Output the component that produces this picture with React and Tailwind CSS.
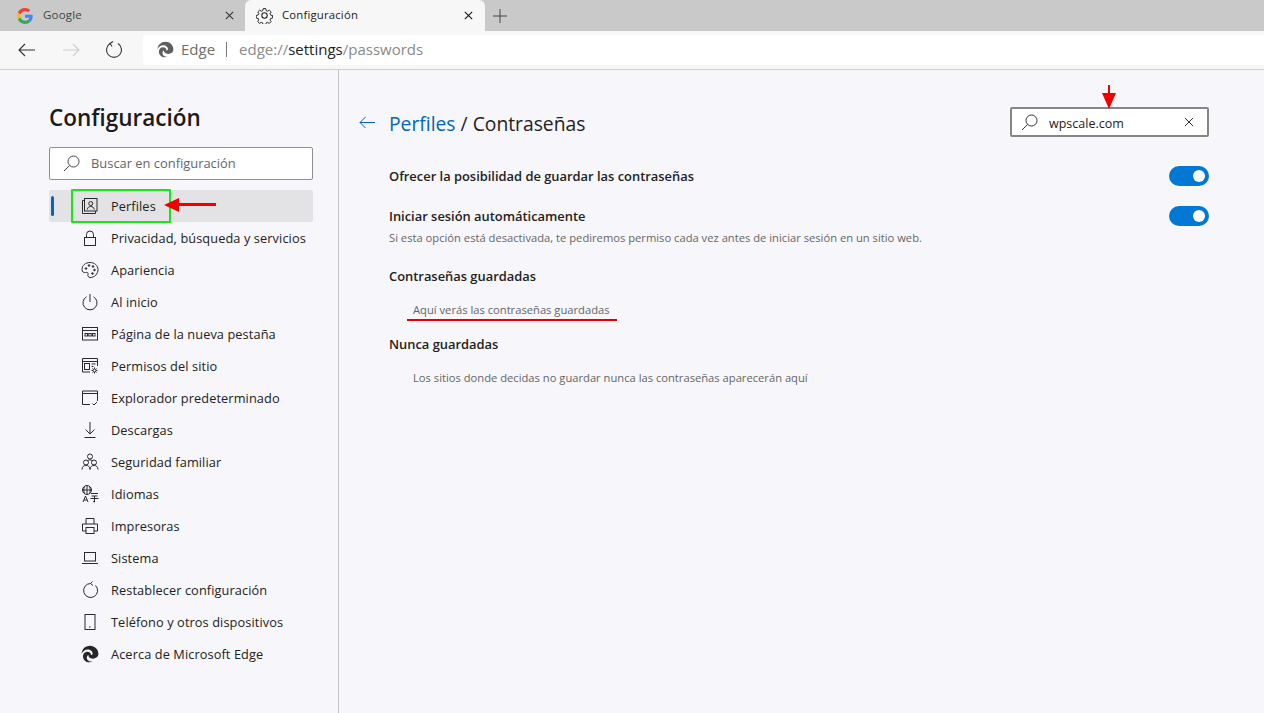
import React from "react";

const S = { fill: "none", stroke: "currentColor", strokeWidth: 1 };
const Ic = ({ children, size = 18, vb = 18, cls = "" }) => (
  <svg width={size} height={size} viewBox={`0 0 ${vb} ${vb}`} {...S} className={cls}>{children}</svg>
);

const EdgeLogo = ({ size = 18, color = "#2b2b2b" }) => (
  <svg width={size} height={size} viewBox="0 0 18 18">
    <path fill={color} d="M9 .8C4.3.8.7 4.4.6 8.8c1.2-2.6 3.6-4.2 6-4.2 2.9 0 5 2 5 3.9 0 .9-.5 1.5-1.2 1.5-.3 0-.4-.1-.4-.3 0-1.6-1.5-3-3.6-3-2.6 0-4.4 2.2-4.4 4.7 0 3.400 3 5.900 6.400 5.900 1.200 0 2.300-.3 3.200-.8-1.100.2-4.600.1-5.600-2.600-.6-1.600.2-3.200 1.400-3.800-.2 1.700 1.300 3.600 4.400 3.600 3 0 5.600-1.900 5.600-4.600C17.400 4.400 13.700.8 9 .8z" />
  </svg>
);

const icons = {
  perfiles: (
    <Ic>
      <rect x="3.500" y="1.500" width="12.500" height="12.500" />
      <path d="M3.500 3.500h-2v13h13v-2.500" />
      <circle cx="9.750" cy="6.500" r="2" />
      <path d="M6.300 12.500c0-4 6.900-4 6.900 0" />
    </Ic>
  ),
  lock: (
    <Ic>
      <rect x="3.500" y="8.500" width="11" height="8" />
      <path d="M5.500 8.500V5.500a3.500 3.500 0 0 1 7 0v3" />
    </Ic>
  ),
  palette: (
    <Ic>
      <path d="M9 1.500c-4.500 0-8 3-8 7 0 2.500 2 3.500 3.500 3 2-.6 3 .6 2.500 2-.5 1.500.5 3 2 3 4.500 0 8-3.500 8-8 0-4-3.500-7-8-7z" />
      <circle cx="5" cy="7.500" r=".8" fill="currentColor" />
      <circle cx="8" cy="4.500" r=".8" fill="currentColor" />
      <circle cx="12" cy="5.500" r=".8" fill="currentColor" />
      <circle cx="13.500" cy="9" r=".8" fill="currentColor" />
      <circle cx="11.500" cy="12.500" r=".8" fill="currentColor" />
    </Ic>
  ),
  power: (
    <Ic>
      <path d="M5.500 3.800a7 7 0 1 0 7 0" />
      <path d="M9 1v8" />
    </Ic>
  ),
  newtab: (
    <Ic>
      <rect x="1.500" y="2.500" width="15" height="12.500" />
      <path d="M1.500 5.500h15" />
      <rect x="4" y="8.500" width="2.500" height="2.500" />
      <rect x="7.750" y="8.500" width="2.500" height="2.500" />
      <rect x="11.500" y="8.500" width="2.500" height="2.500" />
    </Ic>
  ),
  perms: (
    <Ic>
      <path d="M9 15H1.500V1.500h15V9" />
      <path d="M1.500 4.500h15" />
      <rect x="3.500" y="6.500" width="5" height="6" />
      <path d="M10.500 7h4M10.500 9.500h2" />
      <circle cx="13.500" cy="13.500" r="1.500" />
      <path d="M13.500 10.500v1.500M13.500 15v1.500M10.500 13.500h1.500M15 13.500h1.500M11.500 11.500l1 1M14.500 14.500l1 1M15.500 11.500l-1 1M12.500 14.500l-1 1" />
    </Ic>
  ),
  browser: (
    <Ic>
      <path d="M9 15.500H1.500V2h15v10" />
      <path d="M1.500 4.500h15" />
      <path d="M11.500 14.500l1.500 1.500 3-3" />
    </Ic>
  ),
  download: (
    <Ic>
      <path d="M9 1v12M4.500 8.500L9 13l4.500-4.500M3.500 16.500h11" />
    </Ic>
  ),
  family: (
    <Ic>
      <circle cx="9" cy="3.500" r="2.500" />
      <path d="M6 8c.8-1.500 5.200-1.500 6 0" />
      <circle cx="5" cy="9.500" r="2.500" />
      <path d="M1 16.500c0-5.500 8-5.500 8 0" />
      <circle cx="13" cy="9.500" r="2.500" />
      <path d="M9 16.500c0-5.500 8-5.500 8 0" />
    </Ic>
  ),
  lang: (
    <Ic>
      <circle cx="6" cy="5" r="4.500" />
      <path d="M1.500 5h9M6 .5v9M3.500 1.500c-1 2-1 5 0 7M8.500 1.500c1 2 1 5 0 7" />
      <path d="M2 17l2.500-6 2.500 6M3 15h3" />
      <path d="M10 8.500h7M10.500 11h6M9.500 13.500h8M13.500 11v6l-1.500-.5" />
    </Ic>
  ),
  printer: (
    <Ic>
      <path d="M5 7V1.500h8V7" />
      <path d="M5 14H1.500V7h15v7H13" />
      <rect x="5" y="10.500" width="8" height="6" />
    </Ic>
  ),
  laptop: (
    <Ic>
      <rect x="3.500" y="3.500" width="11" height="8.500" />
      <path d="M1 14.500h16" />
    </Ic>
  ),
  reset: (
    <Ic>
      <path d="M9.500 2.500a7 7 0 1 0 5 2" />
      <path d="M11.500 .5L9.500 2.500l2.500 2" />
    </Ic>
  ),
  phone: (
    <Ic>
      <rect x="4" y="1.500" width="10" height="15" />
      <path d="M8 14h1.500" />
    </Ic>
  ),
  edge: <EdgeLogo size={18} color="#262626" />,
};

const nav = [
  ["perfiles", "Perfiles"],
  ["lock", "Privacidad, búsqueda y servicios"],
  ["palette", "Apariencia"],
  ["power", "Al inicio"],
  ["newtab", "Página de la nueva pestaña"],
  ["perms", "Permisos del sitio"],
  ["browser", "Explorador predeterminado"],
  ["download", "Descargas"],
  ["family", "Seguridad familiar"],
  ["lang", "Idiomas"],
  ["printer", "Impresoras"],
  ["laptop", "Sistema"],
  ["reset", "Restablecer configuración"],
  ["phone", "Teléfono y otros dispositivos"],
  ["edge", "Acerca de Microsoft Edge"],
];

const GoogleG = () => (
  <svg width="16" height="16" viewBox="0 0 48 48">
    <path fill="#EA4335" d="M24 9.500c3.500 0 6.700 1.300 9.100 3.500l6.800-6.800C35.800 2.400 30.200 0 24 0 14.600 0 6.500 5.400 2.600 13.200l7.900 6.100C12.400 13.700 17.700 9.500 24 9.500z" />
    <path fill="#4285F4" d="M47 24.500c0-1.600-.1-3.100-.4-4.500H24v9h13c-.6 3-2.200 5.500-4.700 7.200l7.700 6C44.400 38.100 47 31.900 47 24.500z" />
    <path fill="#FBBC05" d="M10.500 28.700c-.5-1.500-.8-3-.8-4.700s.3-3.200.8-4.700l-7.900-6.100C.9 16.500 0 20.100 0 24s.9 7.500 2.600 10.800l7.900-6.100z" />
    <path fill="#34A853" d="M24 48c6.500 0 11.900-2.100 15.900-5.800l-7.700-6c-2.200 1.400-4.900 2.300-8.200 2.300-6.300 0-11.600-4.200-13.500-9.800l-7.900 6.100C6.500 42.600 14.600 48 24 48z" />
  </svg>
);

const Gear = () => (
  <svg width="17" height="17" viewBox="0 0 24 24" fill="none" stroke="#222" strokeWidth="1.500" strokeLinejoin="round">
    <path d="M10 1.500h4l.6 3 2.300 1 2.600-1.700 2.800 2.800-1.700 2.600 1 2.300 3 .6v0h-.1v3.800l-3 .6-1 2.300 1.700 2.600-2.800 2.800-2.600-1.700-2.300 1-.6 3h-4l-.6-3-2.300-1-2.600 1.700-2.800-2.800 1.700-2.600-1-2.300-3-.6v-4l3-.6 1-2.300L1.700 6.600l2.800-2.800 2.600 1.700 2.300-1z" transform="scale(.92) translate(1 1)" />
    <circle cx="12" cy="12" r="3.800" />
  </svg>
);

const X = ({ size = 11, color = "#333", w = 1.300 }) => (
  <svg width={size} height={size} viewBox="0 0 11 11" fill="none" stroke={color} strokeWidth={w}>
    <path d="M1 1l9 9M10 1l-9 9" />
  </svg>
);

const Search = ({ color = "#333" }) => (
  <svg width="17" height="17" viewBox="0 0 17 17" fill="none" stroke={color} strokeWidth="1">
    <circle cx="10.500" cy="6.500" r="5.500" />
    <path d="M6.500 10.500L1 16" />
  </svg>
);

const Toggle = () => (
  <div className="w-10 h-5 rounded-full bg-[#0078d4] flex items-center justify-end pr-1 shrink-0">
    <div className="w-3 h-3 rounded-full bg-white" />
  </div>
);

export default function App() {
  return (
    <div
      className="relative w-[1264px] h-[713px] overflow-hidden bg-[#f7f6fa] text-[#1f1f1f] flex flex-col"
      style={{ fontFamily: '"Open Sans","Noto Sans",sans-serif' }}
    >
      {/* Tabs */}
      <div className="h-[31px] bg-[#c9c9c9] flex items-stretch shrink-0">
        <div className="w-[245px] flex items-center pl-[17px] pr-[11px]">
          <GoogleG />
          <span className="ml-[10px] pb-[2px] text-[11.500px] tracking-[0.2px] text-[#444] flex-1">Google</span>
          <X size={9} color="#333" />
        </div>
        <div className="w-[240px] bg-[#f7f7f7] rounded-t-md flex items-center pl-[11px] pr-[12px]">
          <Gear />
          <span className="ml-[9px] text-[11.300px] tracking-[0.2px] text-[#222] flex-1">Configuración</span>
          <X size={9} color="#111" />
        </div>
        <div className="w-[30px] flex items-center justify-center">
          <svg width="14" height="14" viewBox="0 0 14 14" stroke="#444" strokeWidth="1"><path d="M7 0v14M0 7h14" /></svg>
        </div>
      </div>

      {/* Toolbar */}
      <div className="h-[39px] bg-[#f7f7f7] border-b border-[#cfcfcf] flex items-center shrink-0">
        <div className="w-[54px] flex justify-center">
          <svg width="18" height="14" viewBox="0 0 18 14" fill="none" stroke="#333" strokeWidth="1.100"><path d="M17 7H1M7 1L1 7l6 6" /></svg>
        </div>
        <div className="w-[34px] flex justify-center">
          <svg width="18" height="14" viewBox="0 0 18 14" fill="none" stroke="#cfcfcf" strokeWidth="1.100"><path d="M1 7h16M11 1l6 6-6 6" /></svg>
        </div>
        <div className="w-[52px] mr-[3px] flex justify-center">
          <svg width="18" height="18" viewBox="0 0 18 18" fill="none" stroke="#333" strokeWidth="1.100"><path d="M5 2.500a7.500 7.500 0 1 0 8 0" /><path d="M8 .5L5 2.500l2 3" /></svg>
        </div>
        <div className="flex-1 h-[30px] bg-white rounded-l-sm flex items-center pl-[14px] mt-[-1px]">
          <EdgeLogo size={17} color="#5f5f5f" />
          <span className="ml-[7px] text-[15px] text-[#6e6e6e]">Edge</span>
          <span className="ml-[11px] mr-[12px] w-px h-[15px] bg-[#777]" />
          <span className="text-[15px] text-[#8a8a8a]">
            edge://<span className="text-[#222]">settings</span>/passwords
          </span>
        </div>
      </div>

      {/* Body */}
      <div className="flex-1 flex min-h-0">
        <aside className="w-[339px] shrink-0 border-r border-[#c4c4c4] pl-[49px] pr-[25px] pt-[31px]">
          <h1 className="text-[22.500px] leading-[34px] font-semibold text-[#1b1b1b]">Configuración</h1>
          <div className="mt-[12px] h-[33px] border border-[#8f8f8f] rounded-[2px] bg-white flex items-center pl-[13px]">
            <Search color="#444" />
            <span className="ml-[11px] text-[12.900px] text-[#666]">Buscar en configuración</span>
          </div>
          <nav className="mt-[10px]">
            {nav.map(([k, label], i) => (
              <div
                key={k}
                className={`h-8 flex items-center pl-[32px] rounded-[2px] ${i === 0 ? "bg-[#e3e2e4]" : ""}`}
              >
                {i === 0 && <span className="-ml-[30px] mr-[27px] w-[3px] h-5 rounded-sm bg-[#0067c0]" />}
                <span className="w-[18px] h-[18px] flex items-center justify-center text-[#2b2b2b] shrink-0">{icons[k]}</span>
                <span className="ml-[12px] pt-[2px] text-[12.750px] tracking-[0.1px] text-[#222]">{label}</span>
              </div>
            ))}
          </nav>
        </aside>

        <main className="flex-1 pl-[20px] pr-[55px] pt-[37px]">
          <div className="flex items-center h-[30px]">
            <svg width="17" height="13" viewBox="0 0 17 13" fill="none" stroke="#0067b8" strokeWidth="1"><path d="M16 6.500H1M6.500 1L1 6.500 6.500 12" /></svg>
            <h2 className="ml-[13px] self-start mt-[2px] text-[19.300px] leading-[30px] text-[#222]">
              <span className="text-[#0067b8]">Perfiles</span> / Contraseñas
            </h2>
            <div className="ml-auto w-[199px] h-[30px] border-2 border-[#858585] rounded-[2px] bg-white flex items-center pl-[9px] pr-[13px]">
              <Search color="#333" />
              <span className="ml-[11px] pt-[4px] text-[12.500px] text-[#222] flex-1">wpscale.com</span>
              <X size={10} color="#333" w={1.100} />
            </div>
          </div>

          <div className="pl-[30px]">
            <div className="mt-[29px] h-5 flex items-center justify-between">
              <span className="pt-[2px] text-[12.900px] font-semibold text-[#222]">Ofrecer la posibilidad de guardar las contraseñas</span>
              <Toggle />
            </div>
            <div className="mt-5 h-5 flex items-center justify-between">
              <span className="pt-[2px] text-[12.900px] font-semibold text-[#222]">Iniciar sesión automáticamente</span>
              <Toggle />
            </div>
            <p className="mt-[3px] text-[11.200px] leading-[18px] text-[#666]">
              Si esta opción está desactivada, te pediremos permiso cada vez antes de iniciar sesión en un sitio web.
            </p>
            <h3 className="mt-[19px] text-[12.900px] leading-[20px] font-semibold text-[#222]">Contraseñas guardadas</h3>
            <p className="mt-[15px] pl-6 text-[11.200px] leading-[18px] text-[#666]">Aquí verás las contraseñas guardadas</p>
            <h3 className="mt-[15px] text-[12.900px] leading-[20px] font-semibold text-[#222]">Nunca guardadas</h3>
            <p className="mt-[15px] pl-6 text-[11.200px] leading-[18px] text-[#666]">
              Los sitios donde decidas no guardar nunca las contraseñas aparecerán aquí
            </p>
          </div>
        </main>
      </div>

      {/* Annotations */}
      <div className="absolute left-[71px] top-[189px] w-[100px] h-[34px] border-2 border-[#19e619] rounded-[1px]" />
      <svg className="absolute left-[164px] top-[197px]" width="52" height="16" viewBox="0 0 52 16">
        <path d="M0 8l15-7v5h37v3H15v6z" fill="#f00000" />
      </svg>
      <svg className="absolute left-[1102px] top-[85px]" width="14" height="24" viewBox="0 0 14 24">
        <path d="M6 0h2v8h6l-7 16L0 8h6z" fill="#f00000" />
      </svg>
      <div className="absolute left-[407px] top-[319px] w-[210px] h-[2px] bg-[#e80000]" />
    </div>
  );
}
